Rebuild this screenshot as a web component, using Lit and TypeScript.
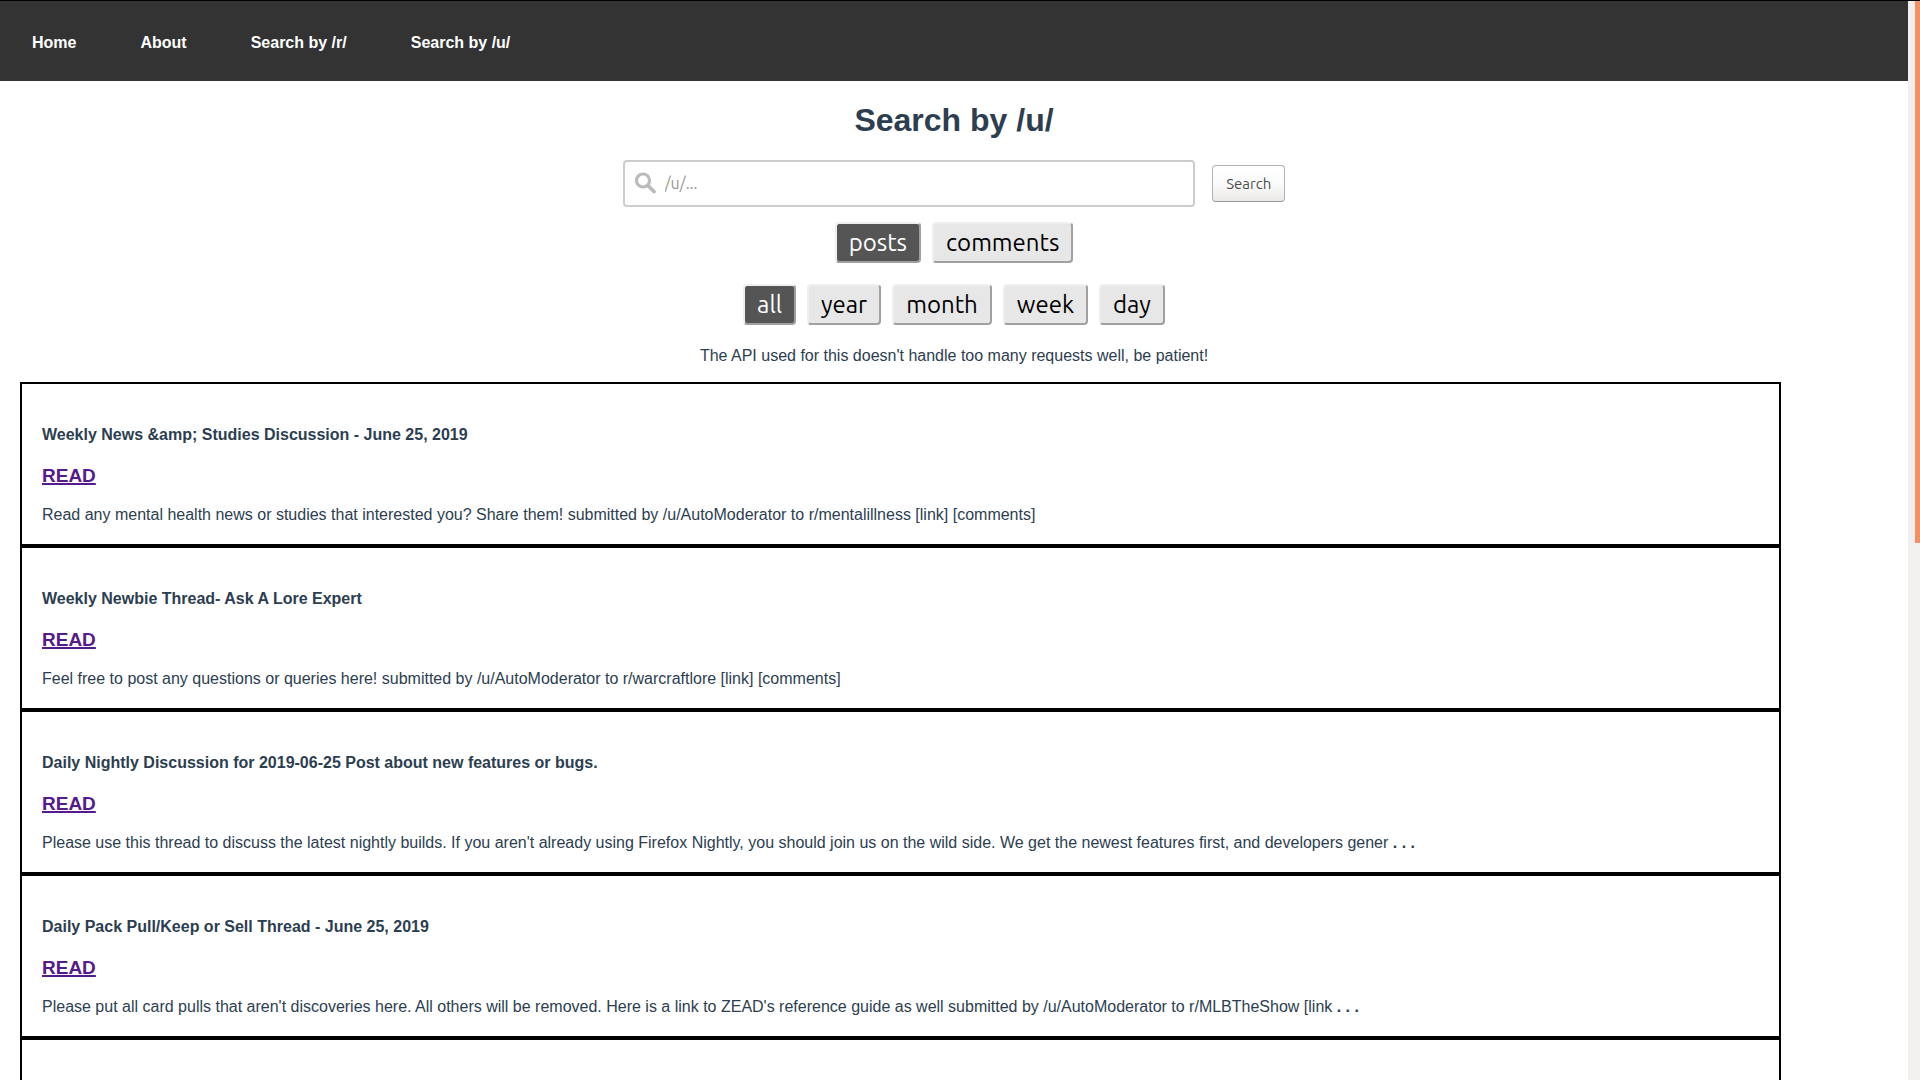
import { LitElement, html, css } from "lit";
import { customElement, property, state } from "lit/decorators.js";
import { classMap } from "lit/directives/class-map.js";

interface Post {
  title: string;
  body: string;
  truncated?: boolean;
}

const POSTS: Post[] = [
  {
    title: "Weekly News &amp; Studies Discussion - June 25, 2019",
    body: "Read any mental health news or studies that interested you? Share them! submitted by /u/AutoModerator to r/mentalillness [link] [comments]",
  },
  {
    title: "Weekly Newbie Thread- Ask A Lore Expert",
    body: "Feel free to post any questions or queries here! submitted by /u/AutoModerator to r/warcraftlore [link] [comments]",
  },
  {
    title: "Daily Nightly Discussion for 2019-06-25 Post about new features or bugs.",
    body: "Please use this thread to discuss the latest nightly builds. If you aren't already using Firefox Nightly, you should join us on the wild side. We get the newest features first, and developers gener",
    truncated: true,
  },
  {
    title: "Daily Pack Pull/Keep or Sell Thread - June 25, 2019",
    body: "Please put all card pulls that aren't discoveries here. All others will be removed. Here is a link to ZEAD's reference guide as well submitted by /u/AutoModerator to r/MLBTheShow [link",
    truncated: true,
  },
];

@customElement("post-card")
export class PostCard extends LitElement {
  @property({ attribute: false }) post?: Post;

  static styles = css`
    :host {
      display: block;
      box-sizing: content-box;
      width: 90%;
      min-height: 120px;
      padding: 20px;
      border: 2px solid #000;
    }
    .title {
      margin: 22px 0 21px;
      font-size: 16px;
      line-height: 18px;
    }
    .read {
      margin: 0 0 18px;
      font-size: 19px;
      line-height: 22px;
    }
    .read a {
      color: #551a8b;
      text-decoration-thickness: 2px;
    }
    .body {
      margin: 0;
      line-height: 19px;
    }
  `;

  render() {
    if (!this.post) return null;
    const { title, body, truncated } = this.post;
    return html`
      <h4 class="title">${title}</h4>
      <h3 class="read"><a href="#">READ</a></h3>
      <p class="body">${body}${truncated ? html`<b> . . .</b>` : null}</p>
    `;
  }
}

@customElement("toggle-group")
export class ToggleGroup extends LitElement {
  @property({ attribute: false }) options: string[] = [];
  @state() private selected = 0;

  static styles = css`
    :host {
      display: flex;
      justify-content: center;
      gap: 11px;
    }
    .toggle {
      height: 41px;
      padding: 1px 12px 0;
      border: 2px solid;
      border-color: #efefef #a0a0a0 #a0a0a0 #efefef;
      border-radius: 4px;
      background: #e7e7e7;
      color: #000;
      font: 24px/32px Ubuntu, "Noto Sans", sans-serif;
    }
    .toggle.active {
      background: #555;
      color: #fff;
    }
  `;

  render() {
    return this.options.map(
      (label, i) => html`<button
        type="button"
        class=${classMap({ toggle: true, active: i === this.selected })}
        aria-pressed=${i === this.selected}
        @click=${() => (this.selected = i)}
      >${label}</button>`
    );
  }
}

@customElement("app-root")
export class AppRoot extends LitElement {
  static styles = css`
    :host {
      display: flex;
      box-sizing: border-box;
      height: 100vh;
      overflow: hidden;
      border-top: 1px solid #000;
      background: #fff;
      color: #2c3e50;
      font: 16px/18px "Liberation Sans", Arial, sans-serif;
    }
    .page {
      flex: 1;
      min-width: 0;
    }
    .nav {
      display: flex;
      align-items: center;
      box-sizing: border-box;
      height: 80px;
      padding-top: 3px;
      background: #333;
    }
    .nav a {
      padding: 0 32px;
      color: #fff;
      font-weight: bold;
      text-decoration: none;
    }
    .heading {
      margin: 21px 0;
      font-size: 32px;
      line-height: 37px;
      text-align: center;
    }
    .search {
      display: flex;
      align-items: center;
      justify-content: center;
      gap: 17px;
      margin-bottom: 15px;
    }
    .field {
      display: flex;
      align-items: center;
      box-sizing: border-box;
      width: 30%;
      height: 47px;
      padding: 0 10px 2px;
      gap: 8px;
      border: 2px solid #ccc;
      border-radius: 4px;
      color: #bbb;
    }
    .icon {
      flex: none;
      width: 22px;
      height: 22px;
    }
    .field input {
      flex: 1;
      min-width: 0;
      padding: 0;
      border: 0;
      outline: 0;
      background: none;
      font: 16px/20px Ubuntu, "Noto Sans", sans-serif;
    }
    .field input::placeholder {
      color: #999;
    }
    .submit {
      height: 37px;
      padding: 0 13px;
      border: 1px solid #b4b1ae;
      border-bottom-color: #999;
      border-radius: 4px;
      background: linear-gradient(#fff, #fbfbfb 50%, #eae9e7);
      color: #4c4c4c;
      font: 15px/18px Ubuntu, "Noto Sans", sans-serif;
    }
    .filters {
      display: grid;
      gap: 21px;
    }
    .notice {
      margin: 22px 0 17px;
      text-align: center;
    }
    .posts {
      margin-left: 20px;
      margin-right: -20px;
    }
    .scrollbar {
      z-index: 1;
      width: 12px;
      padding-left: 7px;
      box-sizing: border-box;
      background: #f1f0ee;
    }
    .thumb {
      height: 50.2%;
      background: #f49067;
    }
  `;

  render() {
    return html`
      <div class="page">
        <nav class="nav">
          <a href="#">Home</a>
          <a href="#">About</a>
          <a href="#">Search by /r/</a>
          <a href="#">Search by /u/</a>
        </nav>
        <main>
          <h1 class="heading">Search by /u/</h1>
          <form class="search" @submit=${(e: Event) => e.preventDefault()}>
            <label class="field">
              <svg class="icon" viewBox="0 0 22 22" fill="none" stroke="currentColor" aria-hidden="true">
                <circle cx="8" cy="8.5" r="6.5" stroke-width="3.2" />
                <path d="M13 13.5l6 6" stroke-width="3.8" stroke-linecap="round" />
              </svg>
              <input type="text" placeholder="/u/..." aria-label="/u/..." />
            </label>
            <button class="submit">Search</button>
          </form>
          <div class="filters">
            <toggle-group .options=${["posts", "comments"]}></toggle-group>
            <toggle-group .options=${["all", "year", "month", "week", "day"]}></toggle-group>
          </div>
          <p class="notice">The API used for this doesn't handle too many requests well, be patient!</p>
          <section class="posts">
            ${POSTS.map((post) => html`<post-card .post=${post}></post-card>`)}
            <post-card></post-card>
          </section>
        </main>
      </div>
      <div class="scrollbar"><div class="thumb"></div></div>
    `;
  }
}
